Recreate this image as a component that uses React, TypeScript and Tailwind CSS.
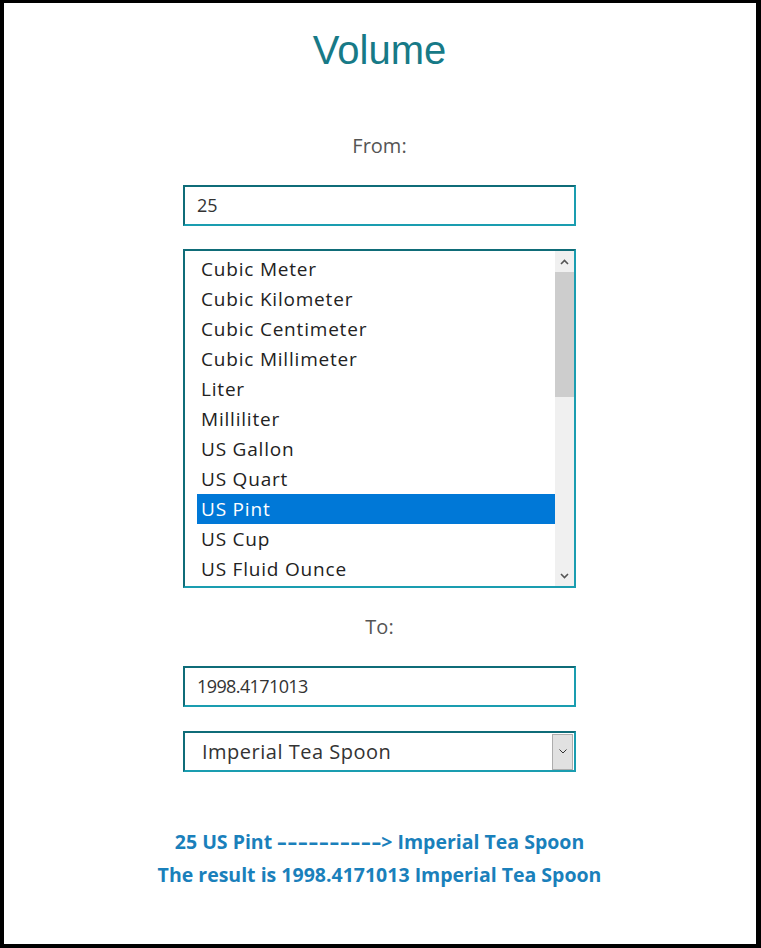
import React from 'react';

const units = [
  'Cubic Meter',
  'Cubic Kilometer',
  'Cubic Centimeter',
  'Cubic Millimeter',
  'Liter',
  'Milliliter',
  'US Gallon',
  'US Quart',
  'US Pint',
  'US Cup',
  'US Fluid Ounce',
];

const selected = 'US Pint';

const font = { fontFamily: '"Open Sans", "Noto Sans", sans-serif' };

const inset =
  'border-2 border-t-[#0f6c78] border-l-[#0f6c78] border-b-[#1a9db0] border-r-[#1a9db0]';

const Chevron = ({ up }: { up?: boolean }) => (
  <svg width="9" height="6" viewBox="0 0 9 6" className="block">
    <path
      d={up ? 'M1 5 L4.5 1.5 L8 5' : 'M1 1 L4.5 4.5 L8 1'}
      fill="none"
      stroke="#555"
      strokeWidth="1.6"
    />
  </svg>
);

export default function App() {
  return (
    <div
      className="w-[761px] h-[948px] bg-white border-black border-l-4 border-r-[5px] border-t-[3px] border-b-4 pr-[1px] flex flex-col items-center"
      style={font}
    >
      <h1
        className="mt-[24px] text-[40px] leading-[46px] text-[#177a87]"
        style={{ fontFamily: '"Liberation Sans", Arial, sans-serif' }}
      >
        Volume
      </h1>

      <p className="mt-[59px] text-[20px] leading-7 text-[#555]">From:</p>

      <div className={`mt-[25px] w-[393px] h-[41px] ${inset} flex items-center pl-3 text-[18px] text-[#333]`}>
        25
      </div>

      <div className={`mt-[23px] w-[393px] h-[339px] ${inset} flex`}>
        <div className="flex-1 pl-3 pt-[3px] overflow-hidden">
          {units.map((u) => (
            <div
              key={u}
              className={`h-[30px] flex items-center px-1 text-[19px] tracking-[0.8px] ${
                u === selected ? 'bg-[#0078d7] text-white' : 'text-[#222]'
              }`}
            >
              {u}
            </div>
          ))}
        </div>
        <div className="w-[19px] bg-[#f0f0f0] flex flex-col">
          <div className="h-[21px] flex items-center justify-center">
            <Chevron up />
          </div>
          <div className="h-[125px] bg-[#cdcdcd]" />
          <div className="flex-1" />
          <div className="h-[21px] flex items-center justify-center">
            <Chevron />
          </div>
        </div>
      </div>

      <p className="mt-[25px] text-[20px] leading-7 text-[#555]">To:</p>

      <div className={`mt-[25px] w-[393px] h-[41px] ${inset} flex items-center pl-3 text-[18px] tracking-[-0.6px] text-[#333]`}>
        1998.4171013
      </div>

      <div className={`mt-[24px] w-[393px] h-[41px] ${inset} flex items-center`}>
        <span className="flex-1 pl-[17px] text-[20px] tracking-[0.5px] text-[#333]">Imperial Tea Spoon</span>
        <div className="w-[21px] h-[36px] mr-[1px] bg-[#e1e1e1] border border-[#adadad] flex items-center justify-center">
          <svg width="8" height="5" viewBox="0 0 8 5">
            <path d="M0.5 0.5 L4 4 L7.5 0.5" fill="none" stroke="#333" strokeWidth="1" />
          </svg>
        </div>
      </div>

      <div className="mt-[53px] text-center text-[19.5px] leading-[33px] font-bold text-[#1a80bb]">
        <p>
          25 US Pint{' '}
          <span className="inline-block w-[104px] text-left">
            <span className="inline-block origin-left scale-x-[1.55] tracking-[0.5px]">----------</span>
          </span>
          &gt; Imperial Tea Spoon
        </p>
        <p>The result is 1998.4171013 Imperial Tea Spoon</p>
      </div>
    </div>
  );
}
